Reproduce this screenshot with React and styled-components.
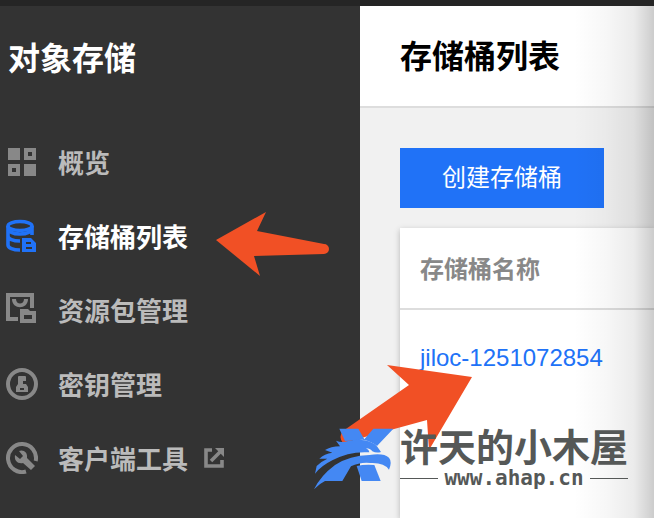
import React from "react";
import styled, { createGlobalStyle } from "styled-components";

const GlobalStyle = createGlobalStyle`
  * { box-sizing: border-box; }
  body {
    margin: 0;
    font-family: "Liberation Sans", "Noto Sans CJK SC", sans-serif;
    background: #f1f1f1;
  }
`;

const Page = styled.div`
  position: relative;
  display: flex;
  flex-direction: column;
  min-height: 100vh;
  overflow: hidden;
`;

const TopBar = styled.div`
  height: 6px;
  background: #252525;
`;

const Body = styled.div`
  flex: 1;
  display: flex;
`;

const Sidebar = styled.aside`
  flex: 0 0 360px;
  padding-bottom: 20px;
  background: #333;
`;

const SideTitle = styled.h2`
  margin: 0;
  padding: 29px 8px 0;
  font-size: 32px;
  line-height: 48px;
  color: #fff;
`;

const Nav = styled.nav`
  display: flex;
  flex-direction: column;
  margin-top: 42px;
`;

const NavLink = styled.a`
  display: flex;
  align-items: center;
  height: 74px;
  padding-left: 6px;
  font-size: 26px;
  font-weight: 700;
  text-decoration: none;
  color: ${(p) => (p.$active ? "#fff" : "#bbb")};
`;

const NavLabel = styled.span`
  padding-bottom: 2px;
`;

const IconSlot = styled.span`
  display: flex;
  width: 52px;
  color: ${(p) => (p.$active ? "#2072f7" : "#888")};
`;

const ExternalSlot = styled.span`
  display: flex;
  margin-left: 16px;
  color: #888;
`;

const Main = styled.main`
  position: relative;
  flex: 1;
  min-width: 0;
  display: flex;
  flex-direction: column;
`;

const EdgeShade = styled.div`
  position: absolute;
  inset: 0 0 0 auto;
  width: 80px;
  pointer-events: none;
  background: linear-gradient(
    to right,
    rgba(0, 0, 0, 0) 0%,
    rgba(0, 0, 0, 0.03) 40%,
    rgba(0, 0, 0, 0.08) 75%,
    rgba(0, 0, 0, 0.2) 100%
  );
`;

const Header = styled.header`
  height: 102px;
  padding: 27px 40px 0;
  background: #fff;
  border-bottom: 2px solid #ddd;
`;

const Heading = styled.h1`
  margin: 0;
  font-size: 32px;
  line-height: 48px;
  color: #000;
`;

const Content = styled.section`
  flex: 1;
  display: flex;
  flex-direction: column;
  align-items: flex-start;
  gap: 20px;
  padding: 40px 0 0 40px;
`;

const CreateButton = styled.button`
  height: 60px;
  padding: 0 42px 6px;
  border: 0;
  background: #2072f7;
  color: #fff;
  font-family: inherit;
  font-size: 24px;
`;

const Card = styled.div`
  flex: 1;
  align-self: stretch;
  background: #fff;
  box-shadow: 0 2px 6px rgba(0, 0, 0, 0.25);
`;

const Table = styled.table`
  width: 100%;
  border-collapse: separate;
  border-spacing: 0;
  font-size: 24px;
  text-align: left;
`;

const HeadCell = styled.th`
  height: 82px;
  padding: 0 20px 2px;
  border-bottom: 2px solid #ddd;
  color: #888;
`;

const Cell = styled.td`
  height: 96px;
  padding: 0 20px;
`;

const BucketLink = styled.a`
  color: #2072f7;
  text-decoration: none;
`;

const Annotations = styled.svg`
  position: absolute;
  top: 200px;
  left: 200px;
  pointer-events: none;
`;

const Watermark = styled.div`
  position: absolute;
  top: 426px;
  left: 312px;
  display: flex;
  gap: 4px;
  color: #555857;
  pointer-events: none;
`;

const WatermarkText = styled.div`
  display: flex;
  flex-direction: column;
  padding-top: 2px;
`;

const WatermarkName = styled.div`
  font-size: 38px;
  font-weight: 700;
  line-height: 40px;
  white-space: nowrap;
`;

const WatermarkSite = styled.div`
  display: flex;
  align-items: center;
  gap: 6px;
  font-family: "DejaVu Sans Mono", monospace;
  font-size: 21px;
  font-weight: 700;
  line-height: 20px;

  &::before,
  &::after {
    content: "";
    flex: 1;
    height: 1px;
    background: currentColor;
  }
`;

function OverviewIcon() {
  return (
    <svg width="32" height="32" viewBox="0 0 32 32" fill="currentColor" fillRule="evenodd">
      <path d="M2 2h12v12H2zM18 2h12v12H18zm4 4v4h4V6zM2 18h12v12H2zm4 4v4h4v-4zM18 18h12v12H18z" />
    </svg>
  );
}

function BucketIcon() {
  return (
    <svg width="32" height="34" viewBox="0 0 32 34" fill="none" stroke="currentColor" strokeWidth="3.6">
      <ellipse cx="14" cy="7" rx="12" ry="4.5" />
      <path d="M2 7v19c0 3 5 5 12 5M2 17c0 3 5 5 12 5M2 9c1 4 6 6 12 6s11-2 12-6M26 7v9" />
      <path d="M16 19h9l5 5v9H16zM20 23v2h5v-2zM20 28v2h6v-2z" fill="currentColor" fillRule="evenodd" stroke="none" />
    </svg>
  );
}

function PackageIcon() {
  return (
    <svg width="34" height="34" viewBox="0 2 34 34">
      <path d="M12 28H2V4h24v13" fill="none" stroke="currentColor" strokeWidth="4" />
      <path d="M6 8h4c0 6 8 6 8 0h4c0 11-16 11-16 0z" fill="currentColor" />
      <path d="M14 18h8l2 2h6v12H14zM18 24v4h8v-4z" fill="currentColor" fillRule="evenodd" />
    </svg>
  );
}

function KeyIcon() {
  return (
    <svg width="32" height="32" viewBox="0 0 32 32">
      <circle cx="16" cy="16" r="14" fill="none" stroke="currentColor" strokeWidth="4" />
      <path d="M12 9q0-1 1-1h6q1 0 1 1v4h-3v3h3l2 3v5H10v-5l2-3zM14 20v2h4v-2z" fill="currentColor" fillRule="evenodd" />
    </svg>
  );
}

function ToolIcon() {
  return (
    <svg width="32" height="32" viewBox="0 0 32 32" fill="none" stroke="currentColor">
      <path d="M20 29.5A14 14 0 1 1 29.7 19" strokeWidth="4" />
      <path d="M13 9c4-2 9 1 8 7l8 8-4 4-8-7c-5 1-9-2-8-8l5 4 3-3z" fill="currentColor" stroke="none" />
    </svg>
  );
}

function ExternalIcon() {
  return (
    <svg width="20" height="20" viewBox="0 0 20 20" fill="none" stroke="currentColor">
      <path d="M8 2H2v16h16v-6" strokeWidth="3.6" />
      <path d="M7 13L17 3" strokeWidth="3.6" />
      <path d="M11 0h9v9z" fill="currentColor" stroke="none" />
    </svg>
  );
}

function EagleLogo() {
  return (
    <svg width="84" height="66" viewBox="6 12 252 198" fill="#4488f3">
      <path d="M88 20H145L163 52L190 20H250L201 72Q186 58 158 53L105 57Z" />
      <path d="M15 155L20 132Q32 119 52 110H28Q43 95 67 92L45 84Q62 74 90 73L78 56Q96 63 114 57Q174 45 202 74L213 90Q199 94 187 88Q181 79 168 79Q178 84 178 91Q118 87 67 115Q33 132 15 155Z" />
      <path d="M12 202Q32 161 75 129Q120 100 178 99Q221 92 237 107Q247 119 237 143Q223 121 181 123Q150 120 123 133L97 177H45Q28 185 12 202Z" />
      <path d="M140 132Q165 126 193 129L212 177H155Z" />
    </svg>
  );
}

const items = [
  { label: "概览", Icon: OverviewIcon },
  { label: "存储桶列表", Icon: BucketIcon, active: true },
  { label: "资源包管理", Icon: PackageIcon },
  { label: "密钥管理", Icon: KeyIcon },
  { label: "客户端工具", Icon: ToolIcon, external: true },
];

export default function App() {
  return (
    <Page>
      <GlobalStyle />
      <TopBar />
      <Body>
        <Sidebar>
          <SideTitle>对象存储</SideTitle>
          <Nav>
            {items.map(({ label, Icon, active, external }) => (
              <NavLink key={label} href="#" $active={active}>
                <IconSlot $active={active}><Icon /></IconSlot>
                <NavLabel>{label}</NavLabel>
                {external && <ExternalSlot><ExternalIcon /></ExternalSlot>}
              </NavLink>
            ))}
          </Nav>
        </Sidebar>
        <Main>
          <Header><Heading>存储桶列表</Heading></Header>
          <Content>
            <CreateButton>创建存储桶</CreateButton>
            <Card>
              <Table>
                <thead><tr><HeadCell scope="col">存储桶名称</HeadCell></tr></thead>
                <tbody><tr><Cell><BucketLink href="#">jiloc-1251072854</BucketLink></Cell></tr></tbody>
              </Table>
            </Card>
          </Content>
          <EdgeShade />
        </Main>
      </Body>
      <Annotations width="280" height="260" viewBox="200 200 280 260" fill="#f15025">
        <path d="M216 240L266 212L257 231L324 244A5 5 0 0 1 324 254L254 256L260 276Z" />
        <path d="M472 377L387 365L409 385L343 431Q338 437 343 443L427 420L429 450Z" />
      </Annotations>
      <Watermark>
        <EagleLogo />
        <WatermarkText>
          <WatermarkName>许天的小木屋</WatermarkName>
          <WatermarkSite>www.ahap.cn</WatermarkSite>
        </WatermarkText>
      </Watermark>
    </Page>
  );
}
